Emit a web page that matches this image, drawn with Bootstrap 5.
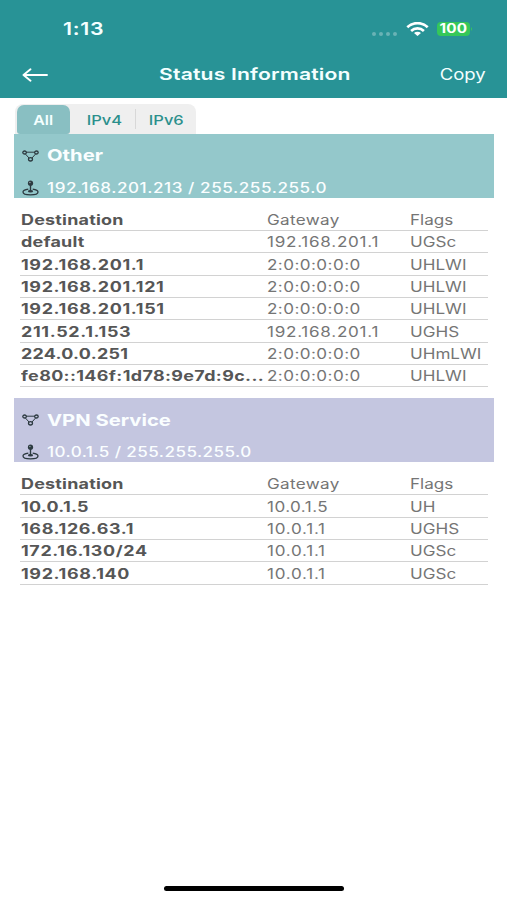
<!DOCTYPE html>
<html lang="en">
<head>
<meta charset="utf-8">
<meta name="viewport" content="width=device-width, initial-scale=1">
<title>Status Information</title>
<link href="https://cdn.jsdelivr.net/npm/bootstrap@5.3.0/dist/css/bootstrap.min.css" rel="stylesheet">
<style>
body{font-family:Inter,"Liberation Sans",sans-serif;background:#fff;height:900px;overflow:hidden;font-size:14px}
.wide{display:inline-block;white-space:nowrap;transform:scaleX(1.22);transform-origin:0 50%;line-height:1}
.wide-center{transform-origin:50% 50%}
.wide-end{transform-origin:100% 50%}
.app-header{background:#289396;height:97.5px;color:#f4ffff}
.status-bar{height:51px;padding:7px 34px 0 63px}
.clock{font-size:17.5px;font-weight:600;letter-spacing:.55px}
.signal{gap:3px;margin-right:9px}
.signal i{width:4px;height:4px;border-radius:50%;background:#69b3b5}
.battery{width:33px;height:14px;border-radius:4px;background:#35c759;color:#fff;font-size:12.5px;font-weight:700;letter-spacing:.2px}
.nav-row{height:46px;padding:1px 21.5px 0 22px}
.page-title{font-size:16.5px;font-weight:600;letter-spacing:.13px;margin-left:13px;transform:scaleX(1.28)}
.copy{font-size:15.2px}
.tabs{height:30px;width:181px;margin:6.5px 0 0 15px;background:#efefef;border-radius:8px 8px 0 0;color:#2b8f8c;font-size:13.5px;font-weight:500}
.tab-active{width:54px;height:29px;margin:1px 0 0 2px;background:#89bfc2;border-radius:7px 7px 3px 3px;color:#f4ffff;font-weight:600;font-size:13px}
.tab-item{width:62px}
.tab-item + .tab-item{border-left:1px solid #d8d8d8;height:20px}
.tabs .wide{position:relative;top:1px}
.tab-item .wide{top:1.6px}
.band{margin:0 13px 0 14px;height:64px;padding-left:8px;color:#fafeff}
.band-teal{background:#94c8cb}
.band-violet{background:#c4c6e0}
.band svg{width:17px;margin-right:8px}
.band-name{height:43px;font-size:16.6px;font-weight:700}
.band-addr{height:21px;font-size:14px;font-weight:500;letter-spacing:.46px}
.band-violet .band-addr{letter-spacing:.35px}
.spacer{height:10.5px}
.route{height:22.37px;margin:0 19px 0 20px;border-bottom:1px solid #d2d2d2;color:#757575;padding:.5px 0 0 .5px}
.dest{width:246.5px;font-weight:650;color:#565656;letter-spacing:.5px}
.dest .wide{transform:scaleX(1.28)}
.gate{width:143px;letter-spacing:.6px}
.word{letter-spacing:.17px}
.gate .word{letter-spacing:.28px}
.mac{letter-spacing:.36px}
.gate .word,.gate .mac{transform:scaleX(1.22)}
.long{letter-spacing:.28px}
.short{letter-spacing:.2px}
.home-bar{width:180px;height:5px;border-radius:3px;background:#000;left:164px;top:886px}
</style>
<script src="https://cdn.jsdelivr.net/npm/bootstrap@5.3.0/dist/js/bootstrap.bundle.min.js"></script>
</head>
<body class="position-relative">
<svg class="d-none">
  <symbol id="nodes" viewBox="0 0 17 12"><g fill="none" stroke="#2c3a40" stroke-width="1.3"><path d="M4.4 2.200h8.200M3.300 3.900l3.800 4.200M13.700 3.900L9.900 8.100" stroke-width="1"/><ellipse cx="2.600" cy="2.500" rx="1.800" ry="1.500"/><ellipse cx="14.400" cy="2.500" rx="1.800" ry="1.500"/><ellipse cx="8.500" cy="9.300" rx="2" ry="1.700"/></g></symbol>
  <symbol id="stick" viewBox="0 0 17 16"><circle cx="8.500" cy="3.200" r="2.600" fill="#2c3a40"/><path d="M8.500 5v6" stroke="#2c3a40" stroke-width="1.400"/><path d="M6.300 9.200C3 9.700 1 10.700 1 12c0 1.700 3.400 2.900 7.500 2.900s7.500-1.200 7.500-2.900c0-1.300-2-2.300-5.300-2.800" fill="none" stroke="#2c3a40" stroke-width="1.300"/><ellipse cx="8.500" cy="11.300" rx="2.600" ry="1.200" fill="#2c3a40"/><circle cx="7.900" cy="2.500" r=".7" fill="#9aacb1"/></symbol>
</svg>

<header class="app-header">
  <div class="status-bar d-flex align-items-center">
    <span class="wide clock">1:13</span>
    <div class="ms-auto d-flex align-items-center">
      <div class="signal d-flex align-self-end"><i></i><i></i><i></i><i></i></div>
      <svg width="23" height="14" viewBox="0 0 23 14" class="me-2"><g fill="none" stroke="#fff" stroke-width="2.700"><path d="M1.300 5.200C7-.2 16-.2 21.700 5.200"/><path d="M5.100 8.900c3.600-3.300 9.200-3.300 12.800 0"/></g><path d="M11.500 14L8 11c1.900-1.600 5.100-1.600 7 0z" fill="#fff"/></svg>
      <div class="battery d-flex align-items-center justify-content-center"><span class="wide wide-center">100</span></div>
      <svg width="3" height="6" viewBox="0 0 3 6"><path d="M1 1v4q2-2 0-4" fill="#35c759"/></svg>
    </div>
  </div>
  <nav class="nav-row d-flex align-items-center justify-content-between">
    <svg width="26" height="14" viewBox="0 0 26 14" fill="none" stroke="#fff" stroke-width="1.900" stroke-linecap="round" stroke-linejoin="round"><path d="M25 7H1.500M8.500 1.300L1.500 7l7 5.700"/></svg>
    <span class="wide wide-center page-title">Status Information</span>
    <span class="wide wide-end copy">Copy</span>
  </nav>
</header>

<main>
  <div class="tabs d-flex align-items-center">
    <div class="tab-active d-flex align-items-center justify-content-center"><span class="wide wide-center">All</span></div>
    <div class="tab-item ms-1 d-flex align-items-center justify-content-center"><span class="wide wide-center">IPv4</span></div>
    <div class="tab-item d-flex align-items-center justify-content-center"><span class="wide wide-center">IPv6</span></div>
  </div>

  <section>
    <div class="band band-teal">
      <div class="band-name d-flex align-items-center"><svg height="12"><use href="#nodes"/></svg><span class="wide">Other</span></div>
      <div class="band-addr d-flex align-items-center"><svg height="16"><use href="#stick"/></svg><span class="wide">192.168.201.213 / 255.255.255.0</span></div>
    </div>
    <div class="spacer"></div>
    <div class="route d-flex align-items-center"><div class="dest"><span class="wide word">Destination</span></div><div class="gate"><span class="wide word">Gateway</span></div><div><span class="wide">Flags</span></div></div>
    <div class="route d-flex align-items-center"><div class="dest"><span class="wide word">default</span></div><div class="gate"><span class="wide">192.168.201.1</span></div><div><span class="wide">UGSc</span></div></div>
    <div class="route d-flex align-items-center"><div class="dest"><span class="wide">192.168.201.1</span></div><div class="gate"><span class="wide mac">2:0:0:0:0:0</span></div><div><span class="wide">UHLWI</span></div></div>
    <div class="route d-flex align-items-center"><div class="dest"><span class="wide">192.168.201.121</span></div><div class="gate"><span class="wide mac">2:0:0:0:0:0</span></div><div><span class="wide">UHLWI</span></div></div>
    <div class="route d-flex align-items-center"><div class="dest"><span class="wide">192.168.201.151</span></div><div class="gate"><span class="wide mac">2:0:0:0:0:0</span></div><div><span class="wide">UHLWI</span></div></div>
    <div class="route d-flex align-items-center"><div class="dest"><span class="wide">211.52.1.153</span></div><div class="gate"><span class="wide">192.168.201.1</span></div><div><span class="wide">UGHS</span></div></div>
    <div class="route d-flex align-items-center"><div class="dest"><span class="wide short">224.0.0.251</span></div><div class="gate"><span class="wide mac">2:0:0:0:0:0</span></div><div><span class="wide">UHmLWI</span></div></div>
    <div class="route d-flex align-items-center"><div class="dest"><span class="wide long">fe80::146f:1d78:9e7d:9c...</span></div><div class="gate"><span class="wide mac">2:0:0:0:0:0</span></div><div><span class="wide">UHLWI</span></div></div>
  </section>

  <section style="margin-top:11px">
    <div class="band band-violet">
      <div class="band-name d-flex align-items-center"><svg height="12"><use href="#nodes"/></svg><span class="wide">VPN Service</span></div>
      <div class="band-addr d-flex align-items-center"><svg height="16"><use href="#stick"/></svg><span class="wide">10.0.1.5 / 255.255.255.0</span></div>
    </div>
    <div class="spacer"></div>
    <div class="route d-flex align-items-center"><div class="dest"><span class="wide word">Destination</span></div><div class="gate"><span class="wide word">Gateway</span></div><div><span class="wide">Flags</span></div></div>
    <div class="route d-flex align-items-center"><div class="dest"><span class="wide short">10.0.1.5</span></div><div class="gate"><span class="wide mac">10.0.1.5</span></div><div><span class="wide">UH</span></div></div>
    <div class="route d-flex align-items-center"><div class="dest"><span class="wide">168.126.63.1</span></div><div class="gate"><span class="wide">10.0.1.1</span></div><div><span class="wide">UGHS</span></div></div>
    <div class="route d-flex align-items-center"><div class="dest"><span class="wide">172.16.130/24</span></div><div class="gate"><span class="wide">10.0.1.1</span></div><div><span class="wide">UGSc</span></div></div>
    <div class="route d-flex align-items-center"><div class="dest"><span class="wide">192.168.140</span></div><div class="gate"><span class="wide">10.0.1.1</span></div><div><span class="wide">UGSc</span></div></div>
  </section>
</main>
<div class="home-bar position-absolute"></div>
</body>
</html>
